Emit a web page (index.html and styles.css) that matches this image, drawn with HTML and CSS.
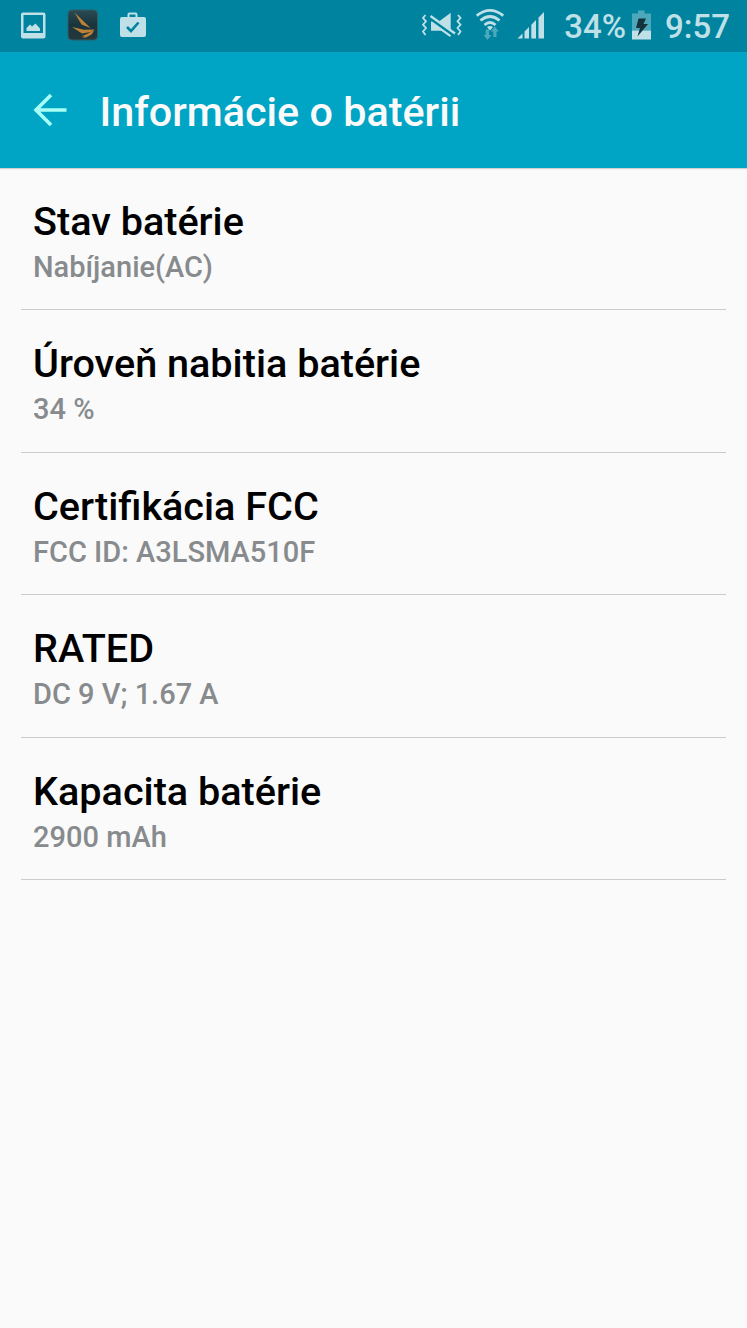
FILE: index.html
```html
<!DOCTYPE html>
<html lang="sk">
<head>
    <meta charset="utf-8">
    <title>Informácie o batérii</title>
    <meta name="viewport" content="width=device-width, initial-scale=1.0">
    <link rel="stylesheet" href="styles.css">
</head>

<body>
<!--status bar-->
<div id="statusbar">
    <svg class="icon-picture" width="26" height="28" viewBox="0 0 26 28">
        <path fill-rule="evenodd" d="M3 0.500h20.500a2 2 0 0 1 2 2v22a2 2 0 0 1-2 2h-20.500a2 2 0 0 1-2-2v-22a2 2 0 0 1 2-2zM3.500 3v18h19.500v-18z"/>
        <path d="M6.500 19v-3l3.500-3.500 2 2 3.500-3 4.500 5v2.500z"/>
    </svg>
    <svg class="icon-app" width="32" height="32" viewBox="0 0 32 32">
        <defs>
            <linearGradient id="appfill" x1="0" y1="0" x2="0" y2="1">
                <stop offset="0" stop-color="#2a4b54"/>
                <stop offset="0.5" stop-color="#19343c"/>
                <stop offset="1" stop-color="#25383d"/>
            </linearGradient>
        </defs>
        <rect x="1" y="1" width="29.500" height="30" rx="4" fill="url(#appfill)" stroke="#345b65"/>
        <path fill="#bd8236" d="M7.500 3.500l16 15.500-9-3.500zM5 18l12 2.700 10.500-.2-4 2.500-8.500 1.500zM14 27.500l6-2.500 7.500-4-3 4.500-5.500 3h-3.500l2-1.500z"/>
    </svg>
    <svg class="icon-bag" width="28" height="28" viewBox="0 0 28 28">
        <path fill-rule="evenodd" d="M3 5h5.500v-2.500a2 2 0 0 1 2-2h6a2 2 0 0 1 2 2V5H25a2 2 0 0 1 2 2v16a2 2 0 0 1-2 2H3a2 2 0 0 1-2-2V7a2 2 0 0 1 2-2zM10.500 2.500v2.500h6V2.500z"/>
        <path class="check" d="M8 15l4 4 7.500-8.500"/>
    </svg>
    <div class="spacer"></div>
    <svg class="icon-mute" width="42" height="28" viewBox="0 0 42 28">
        <path d="M10 9.500h8L29.700.7v24l-9.200-6H10z"/>
        <path class="gap" d="M8 5.500l25 18"/>
        <path class="slash" d="M9.500 4l24.500 17.500"/>
        <path class="lower" d="M10.500 10.500l18.700 13.500"/>
        <path class="wave" d="M4.500 3l-2.500 3 3 3.300-3 3.400 3 3.300-3 3.500 2.500 3.500M37 3l2.500 3-3 3.300 3 3.400-3 3.300 3 3.500-2.500 3.500"/>
    </svg>
    <svg class="icon-wifi" width="30" height="32" viewBox="0 0 30 32">
        <path class="arc" d="M1.700 7.700q13.300-10.700 26.600 0M5.500 12.500q9.500-8 19 0M9.500 17q5.500-5 11 0"/>
        <path d="M12 19q3-2 6 0l-3 3.500z"/>
        <path class="dim" d="M10.700 21.500h3.300v5.500h2.500l-4 5-4-5h2.200zM18.300 29v-5.500h-2.500l4-5 4 5h-2.300v5.500z"/>
    </svg>
    <svg class="icon-signal" width="28" height="28" viewBox="0 0 28 28">
        <path d="M.5 27.500l5-5v5zM7.500 20.500l4.500-4.500v11.500H7.500zM14.300 13.700l4.700-4.700v18.500h-4.700zM21.500 6.500l5.500-5.500v26.500h-5.500z"/>
    </svg>
    <span class="percent">34%</span>
    <svg class="icon-battery" width="19" height="30" viewBox="0 0 19 30">
        <path class="dim" d="M0 3.500h6v-3h6.500v3H19V20.500H0z"/>
        <path d="M0 20.500h19v9H0z"/>
        <path class="bolt" d="M6.500 8.500h7.500l-2.500 5.500h4.500l-10.500 12.500 2.500-8.500H4z"/>
    </svg>
    <span class="clock">9:57</span>
</div>

<!--action bar-->
<div id="header">
    <svg class="back" width="34" height="34" viewBox="0 0 34 34">
        <path d="M18 2L3 17l15 15M3 17h30.500"/>
    </svg>
    <h1>Informácie o batérii</h1>
</div>

<ul id="info">
    <li>
        <div class="name">Stav batérie</div>
        <div class="value">Nabíjanie(AC)</div>
    </li>
    <li>
        <div class="name">Úroveň nabitia batérie</div>
        <div class="value">34 %</div>
    </li>
    <li>
        <div class="name">Certifikácia FCC</div>
        <div class="value">FCC ID: A3LSMA510F</div>
    </li>
    <li>
        <div class="name">RATED</div>
        <div class="value">DC 9 V; 1.67 A</div>
    </li>
    <li>
        <div class="name">Kapacita batérie</div>
        <div class="value">2900 mAh</div>
    </li>
</ul>
</body>
</html>
```
FILE: styles.css
```css
* {
    box-sizing: border-box;
}
body {
    margin: 0;
    min-height: 100vh;
    background-color: #fafafa;
    font-family: Roboto, sans-serif;
    font-weight: 500;
}
svg {
    display: block;
    flex: none;
}

/* status bar */
#statusbar {
    display: flex;
    align-items: flex-start;
    height: 52px;
    padding: 0 17px 0 20px;
    background-color: #00839e;
    color: #bfe0e7;
}
#statusbar svg {
    fill: #bfe0e7;
}
#statusbar .dim {
    fill: #4da8bb;
}
.spacer {
    flex: 1;
}
.icon-picture {
    margin-top: 12px;
}
.icon-app {
    margin: 9px 0 0 21px;
}
.icon-bag {
    margin: 12px 0 0 20px;
}
#statusbar .check {
    fill: none;
    stroke: #00839e;
    stroke-width: 2.6;
}
.icon-mute {
    margin: 12px 12px 0 0;
}
.gap, .slash, .lower, .wave, .arc {
    fill: none;
    stroke: #bfe0e7;
}
.gap {
    stroke: #00839e;
    stroke-width: 3;
}
.slash {
    stroke-width: 2.4;
}
.lower {
    stroke-width: 2;
}
.wave {
    stroke-width: 1.8;
}
.icon-wifi {
    margin: 8px 12px 0 0;
}
.arc {
    stroke-width: 2.8;
}
.icon-signal {
    margin: 11px 19px 0 0;
}
.percent, .clock {
    font-size: 33px;
    line-height: 54px;
    white-space: nowrap;
}
.icon-battery {
    margin: 10px 14px 0 6px;
}
#statusbar .bolt {
    fill: #15333c;
}

/* action bar */
#header {
    display: flex;
    align-items: center;
    height: 116px;
    padding: 0 33px;
    background-color: #00a5c5;
    box-shadow: 0 1px 1px #d0d0d0;
}
.back path {
    fill: none;
    stroke: #a7fff6;
    stroke-width: 3.6;
}
h1 {
    margin: 4px 0 0 32.500px;
    color: #fafafa;
    font-size: 41.3px;
    font-weight: 500;
    line-height: 48px;
    white-space: nowrap;
}

/* list of values */
#info {
    list-style: none;
    margin: 0 21px;
    padding: 0;
}
#info li {
    height: 142.5px;
    padding: 30px 12px 0;
    border-bottom: 1px solid #cbcbcb;
}
#info li:first-child {
    height: 142px;
}
.name {
    color: #000;
    font-size: 39.6px;
    line-height: 48px;
}
.value {
    color: #888b8d;
    font-size: 29px;
    line-height: 42px;
}
```
